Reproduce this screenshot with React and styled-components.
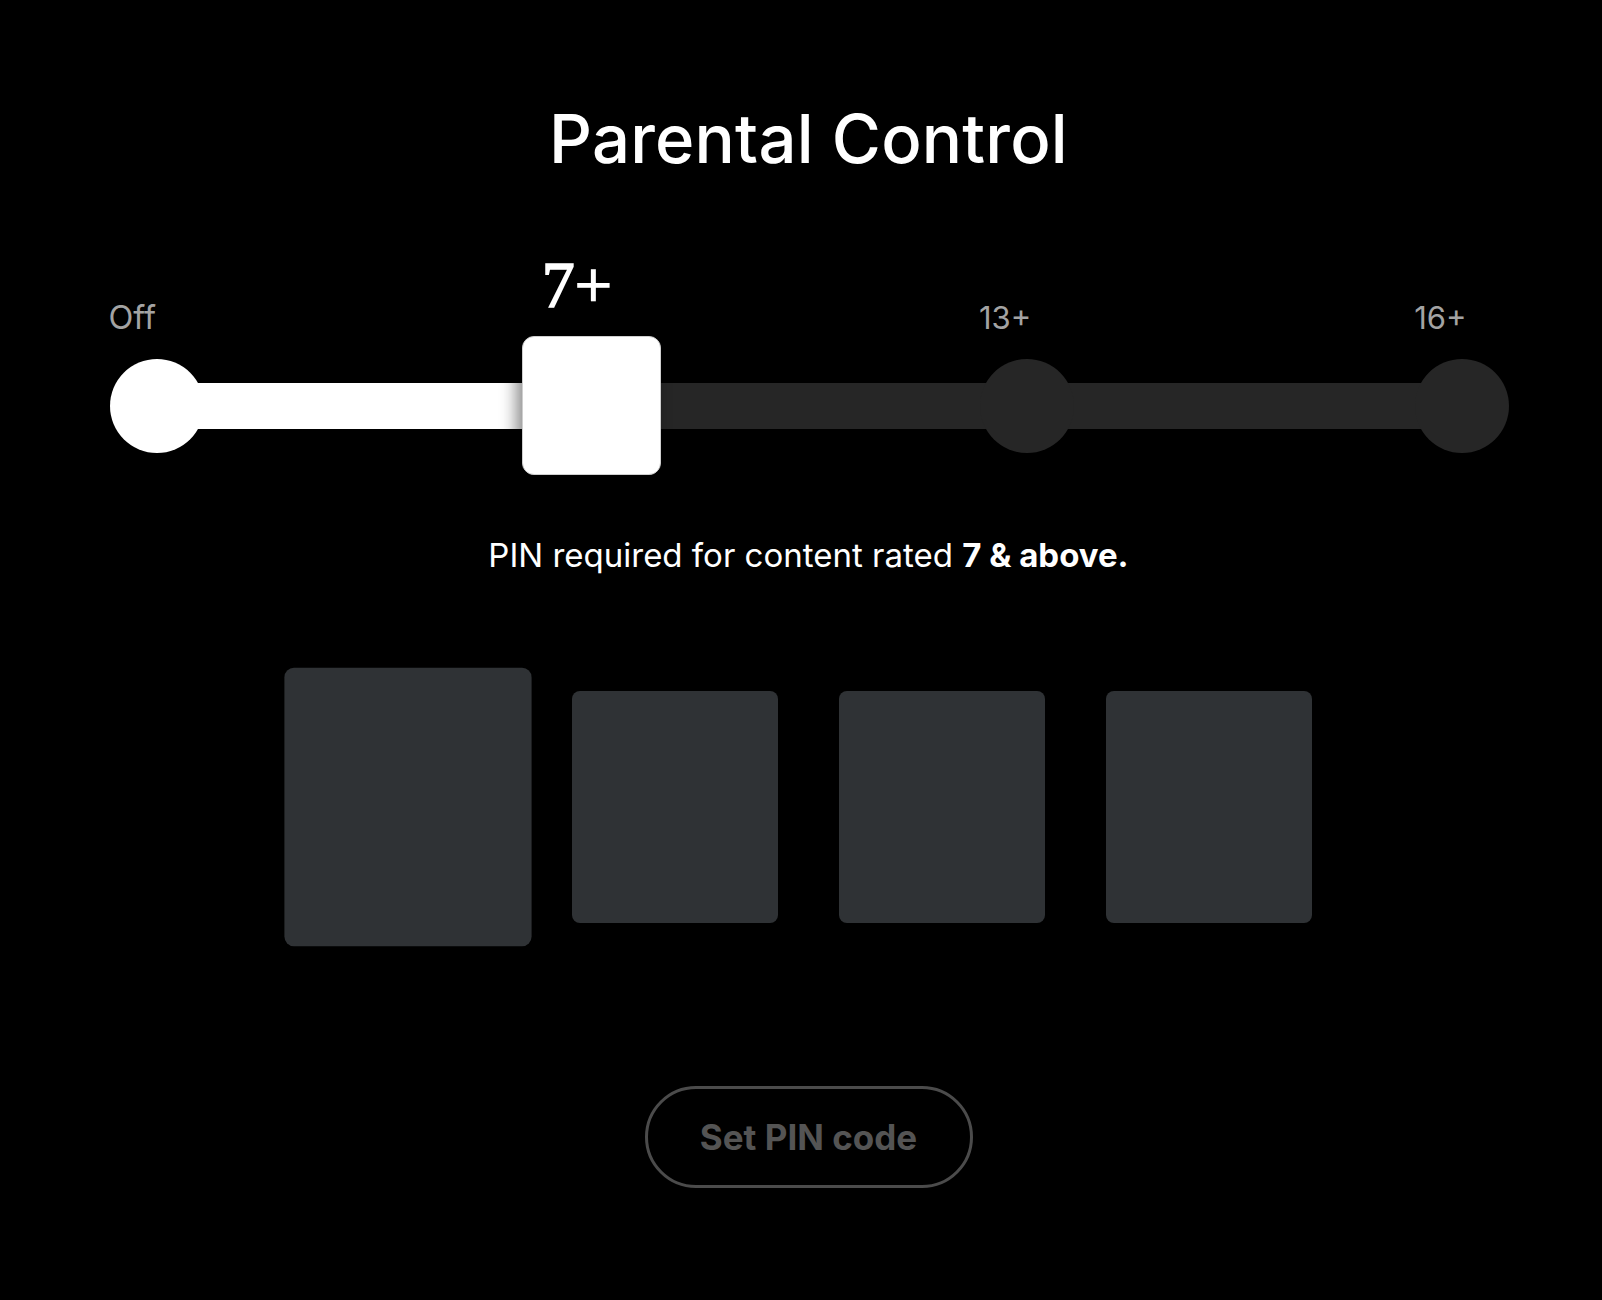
import React from "react";
import styled, { createGlobalStyle, css } from "styled-components";

const GlobalStyle = createGlobalStyle`
  html, body {
    margin: 0;
    padding: 0;
    background: #000;
  }
  body {
    font-family: Inter, "Noto Sans", sans-serif;
    color: #fff;
  }
`;

const STOPS = [
  { label: "Off", align: "start" },
  { label: "7+", align: "thumb" },
  { label: "13+", align: "end" },
  { label: "16+", align: "end" },
];
const ACTIVE = 1;

const Page = styled.main`
  box-sizing: border-box;
  width: 100%;
  min-height: 1300px;
  padding: 105px 0 0 15px;
  display: flex;
  flex-direction: column;
  align-items: center;
  background: #000;
`;

const Title = styled.h1`
  margin: 0;
  font-family: Inter, sans-serif;
  font-size: 67px;
  line-height: 1;
  font-weight: 500;
  color: #fff;
  letter-spacing: 0.2px;
`;

const Slider = styled.div`
  display: flex;
  align-items: center;
  width: 1400px;
  height: 139px;
  margin: 164px 0 0 2px;
`;

const Stop = styled.div`
  position: relative;
  flex: none;
  display: flex;
  justify-content: center;
  width: 94px;
`;

const Segment = styled.div`
  flex: 1;
  height: 46px;
  margin: 0 -24px;
  background: ${(p) => (p.$filled ? "#fff" : "#262626")};
`;

const Dot = styled.div`
  width: 94px;
  height: 94px;
  border-radius: 50%;
  background: ${(p) => (p.$on ? "#fff" : "#262626")};
`;

const Thumb = styled.div`
  position: relative;
  z-index: 1;
  flex: none;
  width: 139px;
  height: 139px;
  margin: 0 -22.5px;
  box-sizing: border-box;
  border-radius: 12px;
  background: #fff;
  border: 1px solid #cfcfcf;
  box-shadow: -6px 0 16px rgba(0, 0, 0, 0.45);
`;

const Label = styled.span`
  position: absolute;
  bottom: calc(100% + 26px);
  font-family: Inter, sans-serif;
  font-size: 31px;
  line-height: 1;
  font-weight: 400;
  color: #a3a3a3;
  white-space: nowrap;
  ${(p) =>
    p.$align === "start" &&
    css`
      left: -1px;
      bottom: calc(100% + 24.5px);
      font-size: 32.5px;
    `}
  ${(p) =>
    p.$align === "end" &&
    css`
      right: calc(50% - 4px);
    `}
  ${(p) =>
    p.$align === "thumb" &&
    css`
      bottom: calc(100% + 18px);
      left: -3px;
      font-family: "Liberation Serif", "DejaVu Serif", serif;
      font-size: 66px;
      color: #fff;
      -webkit-text-stroke: 1.6px #fff;
    `}
`;

const Note = styled.p`
  margin: 64px 0 0;
  font-family: Inter, sans-serif;
  font-size: 33px;
  line-height: 1;
  font-weight: 400;
  color: #fff;
  white-space: nowrap;
`;

const Strong = styled.strong`
  font-weight: 700;
`;

const PinRow = styled.div`
  display: flex;
  gap: 61px;
  margin-top: 119px;
`;

const PinBox = styled.div`
  width: 206px;
  height: 232px;
  border-radius: 8px;
  background: #2f3235;
  transform: scale(${(p) => (p.$focused ? 1.2 : 1)});
`;

const Button = styled.button`
  margin-top: 163px;
  box-sizing: border-box;
  width: 328px;
  height: 102px;
  border-radius: 51px;
  border: 3px solid #4b4b4b;
  background: transparent;
  font-family: Inter, sans-serif;
  font-size: 35px;
  font-weight: 700;
  color: #545454;
  cursor: pointer;
`;

function ParentalSlider() {
  const parts = [];
  STOPS.forEach((s, i) => {
    if (i > 0) parts.push(<Segment key={`seg-${i}`} $filled={i <= ACTIVE} />);
    parts.push(
      <Stop key={s.label}>
        {i === ACTIVE ? <Thumb /> : <Dot $on={i < ACTIVE} />}
        <Label $align={s.align}>{s.label}</Label>
      </Stop>
    );
  });
  return <Slider>{parts}</Slider>;
}

export default function App() {
  return (
    <>
      <GlobalStyle />
      <Page>
        <Title>Parental Control</Title>
        <ParentalSlider />
        <Note>
          PIN required for content rated <Strong>7 &amp; above.</Strong>
        </Note>
        <PinRow>
          {[0, 1, 2, 3].map((i) => (
            <PinBox key={i} $focused={i === 0} />
          ))}
        </PinRow>
        <Button>Set PIN code</Button>
      </Page>
    </>
  );
}
